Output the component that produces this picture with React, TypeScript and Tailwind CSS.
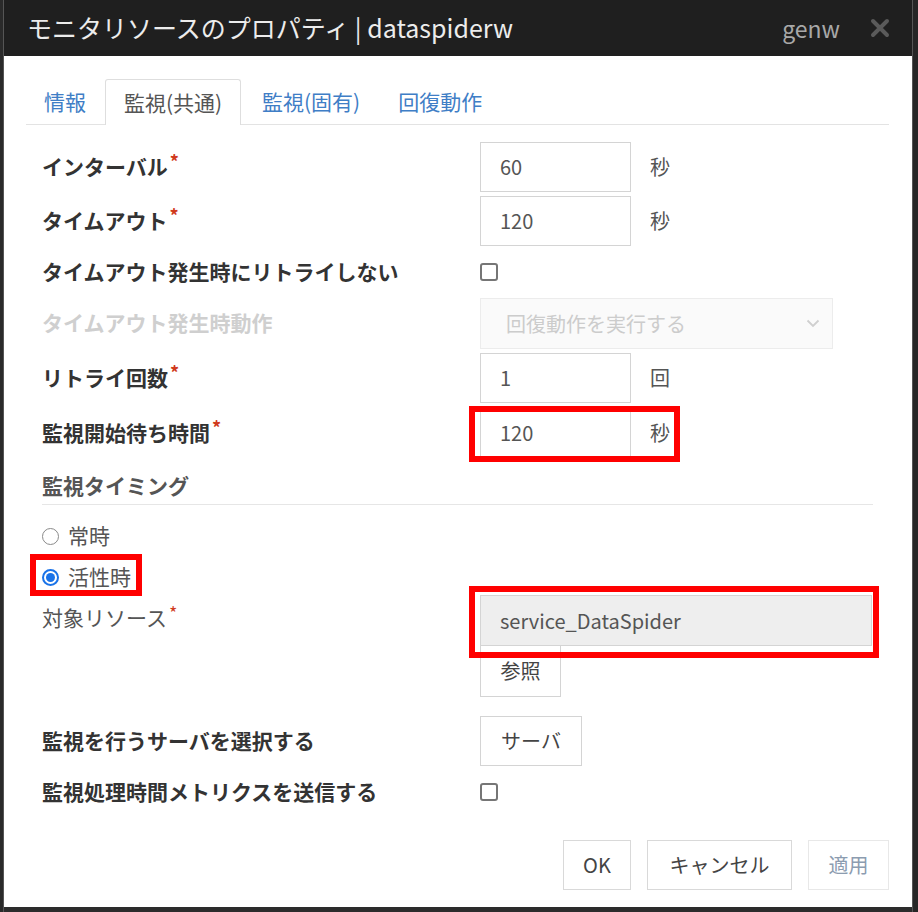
import * as React from "react";

const jp = { fontFamily: '"Noto Sans CJK JP", "Noto Sans", sans-serif' };

function Req() {
  return <span className="ml-0.5 align-top text-[18px] leading-none text-[#d03a1c]">*</span>;
}

function Label({ children, req, dim, bold = true }: { children: React.ReactNode; req?: boolean; dim?: boolean; bold?: boolean }) {
  return (
    <div
      className={`-mt-[3px] w-[438px] shrink-0 text-[21px] leading-7 ${bold ? "font-bold" : "font-normal"} ${dim ? "text-[#cfcfcf]" : bold ? "text-[#333]" : "text-[#555]"}`}
    >
      {children}
      {req && <Req />}
    </div>
  );
}

function NumInput({ value }: { value: string }) {
  return (
    <div className="flex h-[50px] w-[151px] items-center border border-[#d4d4d4] bg-white pl-[19px] text-[20px] text-[#555]">
      {value}
    </div>
  );
}

function Unit({ children }: { children: React.ReactNode }) {
  return <span className="ml-[19px] text-[20px] text-[#555]">{children}</span>;
}

function Checkbox() {
  return <div className="h-[18px] w-[18px] rounded-[3px] border-2 border-[#767676] bg-white" />;
}

function RedBox({ className }: { className: string }) {
  return <div className={`pointer-events-none absolute border-[6px] border-[#ff0000] ${className}`} />;
}

export default function App() {
  return (
    <div className="flex h-[912px] w-[918px] bg-[#2c2c2c]" style={jp}>
      <div className="w-[4px] shrink-0 border-r border-[#555] bg-[#2a2a2a]" />
      <div className="flex h-[907px] w-[908px] flex-col bg-white">
        <div className="flex h-[56px] shrink-0 items-center bg-[#1f1f1f] pl-[23px] pr-[22px]">
          <span className="text-[25px] text-[#ececec]">モニタリソースのプロパティ | dataspiderw</span>
          <span className="ml-auto text-[23px] text-[#a8a8a8]">genw</span>
          <svg className="ml-[30px]" width="20" height="20" viewBox="0 0 20 20">
            <path d="M3 3 L17 17 M17 3 L3 17" stroke="#5a5a5a" strokeWidth="4" strokeLinecap="round" />
          </svg>
        </div>

        <div className="flex flex-1 flex-col pl-[22px] pr-[23px] pt-[24px]">
          <div className="flex h-[45px] items-end border-b border-[#e3e3e3] text-[21px]">
            <div className="flex h-[45px] items-center pl-[18px] pr-[19px] text-[#3f7ec6]">情報</div>
            <div className="-mb-px flex h-[46px] w-[136px] items-center justify-center rounded-t-[3px] border border-b-0 border-[#dedede] bg-white text-[#555]">
              監視(共通)
            </div>
            <div className="flex h-[45px] items-center px-[21px] text-[#3f7ec6]">監視(固有)</div>
            <div className="flex h-[45px] items-center px-[17px] text-[#3f7ec6]">回復動作</div>
          </div>

          <div className="flex flex-col pl-[16px]">
            <div className="mt-[17px] flex h-[50px] items-center">
              <Label req>インターバル</Label>
              <NumInput value="60" />
              <Unit>秒</Unit>
            </div>
            <div className="mt-[4px] flex h-[50px] items-center">
              <Label req>タイムアウト</Label>
              <NumInput value="120" />
              <Unit>秒</Unit>
            </div>
            <div className="mt-[2px] flex h-[48px] items-center">
              <Label>タイムアウト発生時にリトライしない</Label>
              <Checkbox />
            </div>
            <div className="mt-[2px] flex h-[51px] items-center">
              <Label dim>タイムアウト発生時動作</Label>
              <div className="flex h-[51px] w-[353px] items-center border border-[#ececec] bg-[#fafafa] pl-[25px] pr-[12px] text-[20px] text-[#cccccc]">
                回復動作を実行する
                <svg className="ml-auto" width="14" height="9" viewBox="0 0 14 9">
                  <path d="M1.5 1.5 L7 7 L12.5 1.5" fill="none" stroke="#cfcfcf" strokeWidth="1.8" />
                </svg>
              </div>
            </div>
            <div className="mt-[4px] flex h-[50px] items-center">
              <Label req>リトライ回数</Label>
              <NumInput value="1" />
              <Unit>回</Unit>
            </div>
            <div className="mt-[5px] flex h-[50px] items-center">
              <Label req>監視開始待ち時間</Label>
              <div className="relative flex items-center">
                <NumInput value="120" />
                <Unit>秒</Unit>
                <RedBox className="-left-[11px] -top-[2px] h-[56px] w-[211px]" />
              </div>
            </div>

            <div className="mr-[16px] mt-[13px] border-b border-[#e6e6e6] pb-[5px] text-[21px] font-bold leading-7 text-[#555]">
              監視タイミング
            </div>

            <div className="mt-[17px] flex h-[28px] items-center text-[21px] text-[#555]">
              <div className="h-[17px] w-[17px] rounded-full border border-[#8a8a8a] bg-white" />
              <span className="ml-[9px]">常時</span>
            </div>
            <div className="mt-[13px] flex h-[28px] items-center text-[21px] text-[#555]">
              <div className="relative flex items-center">
                <div className="flex h-[17px] w-[17px] items-center justify-center rounded-full border-2 border-[#1a73e8] bg-white">
                  <div className="h-[9px] w-[9px] rounded-full bg-[#1a73e8]" />
                </div>
                <span className="ml-[9px]">活性時</span>
                <RedBox className="-left-[12px] -top-[7px] h-[42px] w-[112px]" />
              </div>
            </div>

            <div className="mt-[4px] flex items-start">
              <div className="pt-[11px]">
                <Label req bold={false}>対象リソース</Label>
              </div>
              <div className="flex flex-col items-start">
                <div className="relative">
                  <div className="flex h-[51px] w-[392px] items-center border border-[#d4d4d4] bg-[#eeeeee] pl-[19px] text-[20px] text-[#555]">
                    service_DataSpider
                  </div>
                  <RedBox className="-left-[11px] -top-[9px] h-[72px] w-[410px]" />
                </div>
                <div className="flex h-[51px] w-[81px] items-center justify-center border border-t-0 border-[#d4d4d4] bg-white text-[20px] text-[#444]">
                  参照
                </div>
              </div>
            </div>

            <div className="mt-[19px] flex h-[50px] items-center">
              <Label>監視を行うサーバを選択する</Label>
              <div className="flex h-[50px] w-[102px] items-center justify-center border border-[#d4d4d4] bg-white text-[20px] text-[#444]">
                サーバ
              </div>
            </div>
            <div className="mt-[7px] flex h-[38px] items-center">
              <Label>監視処理時間メトリクスを送信する</Label>
              <Checkbox />
            </div>
          </div>

          <div className="mt-[29px] flex justify-end gap-[16px]">
            <div className="flex h-[50px] w-[68px] items-center justify-center border border-[#d9d9d9] bg-white text-[20px] text-[#444]">
              OK
            </div>
            <div className="flex h-[50px] w-[145px] items-center justify-center border border-[#d9d9d9] bg-white text-[20px] text-[#444]">
              キャンセル
            </div>
            <div className="flex h-[50px] w-[81px] items-center justify-center border border-[#e8e8e8] bg-white text-[20px] text-[#8c9cb0]">
              適用
            </div>
          </div>
        </div>
      </div>
      <div className="flex w-[6px] shrink-0 flex-col border-l border-[#555] bg-[#262626]" />
    </div>
  );
}
